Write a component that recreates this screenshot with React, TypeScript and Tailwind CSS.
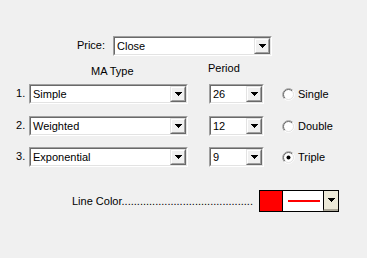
import React from "react";

// small black drop arrow, drawn pixel by pixel
const Arrow = () => (
  <svg width="7" height="4" viewBox="0 0 7 4" shapeRendering="crispEdges">
    <rect x="0" y="0" width="7" height="1" fill="#000" />
    <rect x="1" y="1" width="5" height="1" fill="#000" />
    <rect x="2" y="2" width="3" height="1" fill="#000" />
    <rect x="3" y="3" width="1" height="1" fill="#000" />
  </svg>
);

const DropButton = () => (
  <div className="w-[16px] h-[16px] border border-t-[#e3e3e3] border-l-[#e3e3e3] border-r-[#696969] border-b-[#696969]">
    <div className="h-full flex items-center justify-center bg-[#f0f0f0] border border-t-white border-l-white border-r-[#a0a0a0] border-b-[#a0a0a0]">
      <Arrow />
    </div>
  </div>
);

const Combo = ({ value, width }: { value: string; width: string }) => (
  <div className={`${width} h-[20px] border border-t-[#a0a0a0] border-l-[#a0a0a0] border-r-white border-b-white`}>
    <div className="h-full flex bg-white border border-t-[#696969] border-l-[#696969] border-r-[#e3e3e3] border-b-[#e3e3e3]">
      <div className="flex-1 pl-[2px] leading-[16px]">{value}</div>
      <DropButton />
    </div>
  </div>
);

const Radio = ({ checked }: { checked?: boolean }) => (
  <svg width="13" height="13" viewBox="0 0 13 13">
    <circle cx="6.5" cy="6.5" r="5" fill="#fff" />
    <path d="M2.26 10.74 A6 6 0 0 1 10.74 2.26" stroke="#a0a0a0" fill="none" />
    <path d="M10.74 2.26 A6 6 0 0 1 2.26 10.74" stroke="#fff" fill="none" />
    <path d="M2.96 10.04 A5 5 0 0 1 10.04 2.96" stroke="#696969" fill="none" />
    <path d="M10.04 2.96 A5 5 0 0 1 2.96 10.04" stroke="#e3e3e3" fill="none" />
    {checked && <circle cx="6.5" cy="6.5" r="2" fill="#000" />}
  </svg>
);

const rows = [
  { n: 1, type: "Simple", period: "26", label: "Single", checked: false, gap: "" },
  { n: 2, type: "Weighted", period: "12", label: "Double", checked: false, gap: "mt-[12px]" },
  { n: 3, type: "Exponential", period: "9", label: "Triple", checked: true, gap: "mt-[11px]" },
];

export default function App() {
  return (
    <div className="w-[367px] h-[258px] bg-[#f0f0f0] pt-[36px] flex flex-col text-[11px] leading-[13px] text-black font-['Liberation_Sans',Arial,sans-serif]">
      {/* price */}
      <div className="flex items-start h-[20px]">
        <div className="w-[105px] text-right pt-[3px]">Price:</div>
        <div className="ml-[8px]">
          <Combo value="Close" width="w-[159px]" />
        </div>
      </div>

      {/* column headers */}
      <div className="flex items-start h-[28px]">
        <div className="ml-[91px] w-[117px] pt-[9px]">MA Type</div>
        <div className="pt-[6px]">Period</div>
      </div>

      {rows.map((r) => (
        <div key={r.n} className={`flex items-center h-[20px] ${r.gap}`}>
          <div className="ml-[16px] w-[13px] self-start pt-[3px]">{r.n}.</div>
          <Combo value={r.type} width="w-[159px]" />
          <div className="ml-[21px]">
            <Combo value={r.period} width="w-[55px]" />
          </div>
          <div className="ml-[18px] flex items-center gap-[3px]">
            <Radio checked={r.checked} />
            <span>{r.label}</span>
          </div>
        </div>
      ))}

      {/* line color */}
      <div className="mt-[23px] flex items-center h-[22px]">
        <div className="ml-[72px] w-[187px] whitespace-nowrap">
          Line Color{".".repeat(43)}
        </div>
        <div className="w-[80px] h-[22px] border border-black flex">
          <div className="w-[22px] bg-[#ff0000]" />
          <div className="w-[41px] border-l border-black bg-white flex items-center justify-center">
            <div className="w-[32px] h-[2px] bg-[#ff0000] ml-[1px]" />
          </div>
          <div className="flex-1 border-l border-black bg-[#ece9d8] border-b-2 border-b-[#aca899] flex items-center justify-center">
            <Arrow />
          </div>
        </div>
      </div>
    </div>
  );
}
